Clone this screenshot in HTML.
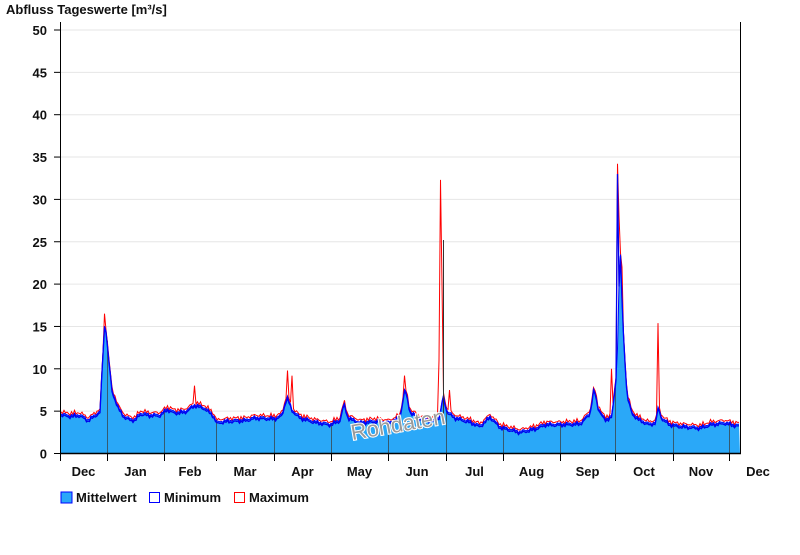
<!DOCTYPE html>
<html><head><meta charset="utf-8"><style>
body{margin:0;background:#fff;width:800px;height:550px;overflow:hidden;font-family:"Liberation Sans",Arial,sans-serif}
svg text{font-family:"Liberation Sans",Arial,sans-serif;font-weight:bold;font-size:13px;fill:#111}
</style></head><body>
<svg id="s" width="800" height="550" xmlns="http://www.w3.org/2000/svg">
<text x="6" y="14" font-size="13">Abfluss Tageswerte [m³/s]</text>
<g id="grid" stroke="#e6e6e6" stroke-width="1"></g>
<path id="fill" fill="#2aa8f8"/>
<g id="months" stroke="#355a70" stroke-width="1"></g>
<polyline id="mx" fill="none" stroke="#ff0000" stroke-width="1"/>
<polyline id="mn" fill="none" stroke="#0000ee" stroke-width="1.3"/>
<polyline id="mean" fill="none" stroke="#0000ff" stroke-width="1"/>
<line x1="443.5" y1="240" x2="443.5" y2="420" stroke="#333" stroke-width="1"/>
<line x1="60.5" y1="22" x2="60.5" y2="454" stroke="#000"/>
<line x1="740.5" y1="22" x2="740.5" y2="454" stroke="#000"/>
<line x1="60" y1="453.5" x2="741" y2="453.5" stroke="#000" stroke-width="1.5"/>
<g id="yl"></g>
<g id="xl"></g>
<text x="398" y="432" transform="rotate(-10 398 425)" text-anchor="middle" font-size="22" style="font-weight:normal;font-size:22px;fill:#9a9a9a;stroke:#fff;stroke-width:2;paint-order:stroke">Rohdaten</text>
<rect x="61" y="492" width="11" height="11" fill="#2aa8f8" stroke="#0000ff"/>
<text x="76" y="502">Mittelwert</text>
<rect x="149.5" y="492.5" width="10" height="10" fill="#fff" stroke="#0000ff"/>
<text x="164" y="502">Minimum</text>
<rect x="234.5" y="492.5" width="10" height="10" fill="#fff" stroke="#ff0000"/>
<text x="249" y="502">Maximum</text>
</svg>
<script>
var ns="http://www.w3.org/2000/svg",Y=v=>453.5-v*8.47;
function el(p,t,a,txt){var e=document.createElementNS(ns,t);for(var k in a)e.setAttribute(k,a[k]);if(txt)e.textContent=txt;document.getElementById(p).appendChild(e);}
var P=[[60,4.7],[70,4.5],[80,4.6],[88,4.0],[93,4.4],[100,5],[103,12],[105,16],[108,12],[112,7.5],[118,5.5],[125,4.3],[135,4.0],[140,4.8],[150,4.6],[160,4.6],[167,5.3],[175,4.9],[185,5],[195,5.8],[205,5.4],[213,4.6],[217,3.7],[225,3.9],[245,4.0],[255,4.3],[275,4.2],[282,4.6],[287,6.8],[292,5.2],[300,4.3],[315,3.8],[330,3.5],[340,4],[344,6],[348,4.3],[360,3.7],[375,3.9],[390,3.7],[400,4.4],[405,7.8],[410,5],[420,4.2],[435,3.9],[440,4.5],[443,7],[447,5],[455,4.3],[470,3.8],[480,3.3],[490,4.4],[500,3.2],[520,2.6],[535,3],[545,3.5],[560,3.5],[580,3.6],[590,4.8],[594,7.8],[598,5.5],[605,4],[612,4.5],[617,10],[620,25],[623,15],[627,7],[632,4.8],[640,4],[650,3.5],[656,3.8],[658,5.5],[662,4.2],[670,3.5],[680,3.3],[700,3.1],[710,3.5],[725,3.7],[735,3.4],[740,3.4]];
function f(x){for(var i=1;i<P.length;i++)if(x<=P[i][0]){var a=P[i-1],b=P[i];return a[1]+(b[1]-a[1])*(x-a[0])/(b[0]-a[0]);}return 3.4;}
for(var v=0;v<=50;v+=5){var y=Y(v);if(v>0)el('grid','line',{x1:61,x2:740,y1:y,y2:y});el('yl','line',{x1:54,x2:60,y1:y,y2:y,stroke:'#000'});el('yl','text',{x:47,y:y+5,'text-anchor':'end'},String(v));}
var ticks=[60,107,164,216,274,331,388,446,503,560,615,673,729],names=['Dec','Jan','Feb','Mar','Apr','May','Jun','Jul','Aug','Sep','Oct','Nov','Dec'];
ticks.forEach((t,i)=>{if(i>0&&t<740)el('months','line',{x1:t+.5,x2:t+.5,y1:Y(f(t)),y2:454});el('xl','line',{x1:t+.5,x2:t+.5,y1:454,y2:461,stroke:'#000'});
var nx=i<12?(t+(ticks[i+1]||740))/2:758;el('xl','text',{x:nx,y:476,'text-anchor':'middle'},names[i]);});
var S={104:17,105:16.5,195:8,288:9.8,290:7,292:9.2,405:9.2,439:11,441:32.3,442:20,444:5,450:7.5,612:10,617:30,618:34.2,619:28,622:22,658:15.4,659:12};
var Mn={611:10,618:33};
var m=[],mx=[],mn=[],d="M61 453.5";
for(var x=61;x<=740;x+=1.5){var v=f(x);var xr=Math.round(x);var j=Math.sin(x*2.3)*0.12+Math.sin(x*0.7)*0.1;v+=j;var h=v+0.12+(Math.sin(x*1.7)+1)*0.12;if(S[xr])h=Math.max(h,S[xr]);var l=v-0.2;if(Mn[xr])l=Mn[xr];
m.push(x+','+Y(v).toFixed(1));mx.push(x+','+Y(h).toFixed(1));mn.push(x+','+Y(l).toFixed(1));d+=" L"+x+" "+Y(v).toFixed(1);}
d+=" L740 453.5Z";
document.getElementById('fill').setAttribute('d',d);
document.getElementById('mean').setAttribute('points',m.join(' '));
document.getElementById('mx').setAttribute('points',mx.join(' '));
document.getElementById('mn').setAttribute('points',mn.join(' '));
</script>
</body></html>
